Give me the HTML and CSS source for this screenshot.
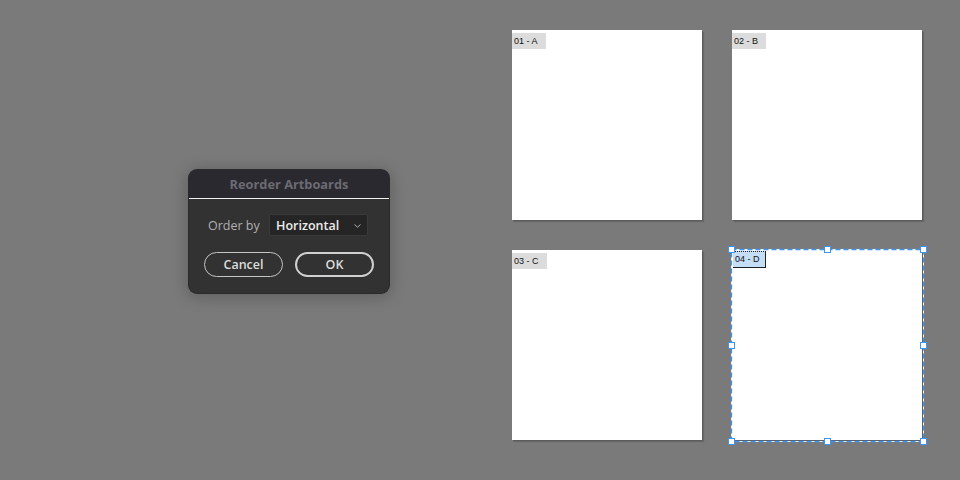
FILE: index.html
```html
<!DOCTYPE html>
<html>
<head>
<meta charset="utf-8">
<link rel="stylesheet" href="styles.css">
</head>
<body>
<div class="canvas">
  <div class="dialog">
    <div class="dialog-title">Reorder Artboards</div>
    <div class="dialog-body">
      <div class="row">
        <span class="label">Order by</span>
        <div class="select">
          <span>Horizontal</span>
          <svg class="chev" width="7" height="4" viewBox="0 0 7 4"><path d="M0.5 0.5 L3.5 3.2 L6.5 0.5" fill="none" stroke="#bdbdbd" stroke-width="0.9"/></svg>
        </div>
      </div>
      <div class="row buttons">
        <div class="btn">Cancel</div>
        <div class="btn primary">OK</div>
      </div>
    </div>
  </div>
  <div class="boards">
    <div class="board"><span class="tag">01 - A</span></div>
    <div class="board"><span class="tag">02 - B</span></div>
    <div class="board"><span class="tag">03 - C</span></div>
    <div class="board selected">
      <span class="tag sel-tag">04 - D</span>
      <svg class="selection" width="200" height="200" viewBox="0 0 200 200">
        <rect x="3.5" y="3.5" width="192" height="192" fill="none" stroke="#f4f4f4" stroke-width="1"/>
        <rect x="3.5" y="3.5" width="192" height="192" fill="none" stroke="#3d95f2" stroke-width="1.3" stroke-dasharray="5 3"/>
        <g fill="#ffffff" stroke="#3d95f2" stroke-width="1">
          <rect x="0.5" y="0.5" width="6" height="6"/>
          <rect x="96.5" y="0.5" width="6" height="6"/>
          <rect x="192.5" y="0.5" width="6" height="6"/>
          <rect x="0.5" y="96.5" width="6" height="6"/>
          <rect x="192.5" y="96.5" width="6" height="6"/>
          <rect x="0.5" y="192.5" width="6" height="6"/>
          <rect x="96.5" y="192.5" width="6" height="6"/>
          <rect x="192.5" y="192.5" width="6" height="6"/>
        </g>
      </svg>
    </div>
  </div>
</div>
</body>
</html>
```
FILE: styles.css
```css
html, body {
  margin: 0;
  padding: 0;
  background: #7a7a7a;
  width: 960px;
  height: 480px;
  overflow: hidden;
}
.canvas {
  display: flex;
  align-items: flex-start;
  padding: 30px 0 0 189px;
}
.dialog {
  margin-top: 140px;
  width: 200px;
  height: 123px;
  border-radius: 8px;
  background: #323232;
  box-shadow: 0 0 0 1px #2a2a2a, 0 2px 16px 2px rgba(0,0,0,0.22);
  overflow: hidden;
  font-family: "Open Sans", "DejaVu Sans", sans-serif;
  position: relative;
}
.dialog-title {
  height: 28px;
  background: #2a2930;
  border-bottom: 1px solid #f2f2f2;
  color: #6c6b73;
  font-weight: 700;
  font-size: 12.8px;
  line-height: 28px;
  text-align: center;
}
.dialog-body {
  padding: 15px 0 0 15px;
  display: flex;
  flex-direction: column;
  gap: 16px;
}
.row {
  display: flex;
  align-items: center;
}
.label {
  color: #b0b0b0;
  font-size: 12.5px;
  width: 61px;
  padding-left: 4px;
}
.select {
  width: 99px;
  height: 22px;
  box-sizing: border-box;
  background: #252525;
  border: 1px solid #3a3a3a;
  border-radius: 2px;
  display: flex;
  align-items: center;
  justify-content: space-between;
  padding: 0 6px 0 6px;
  color: #ececec;
  font-size: 12.5px;
  font-weight: 600;
}
.chev { margin-top: 1px; }
.buttons {
  gap: 12px;
}
.btn {
  width: 79px;
  height: 25px;
  box-sizing: border-box;
  border: 1.5px solid #c4c4c4;
  border-radius: 13px;
  color: #dcdcdc;
  font-size: 12.5px;
  font-weight: 600;
  display: flex;
  align-items: center;
  justify-content: center;
}
.btn.primary {
  border: 2px solid #d0d0d0;
}
.boards {
  margin-left: 123px;
  display: grid;
  grid-template-columns: 190px 190px;
  grid-auto-rows: 190px;
  gap: 30px;
}
.board {
  background: #ffffff;
  box-shadow: 1px 1px 0 #5c5c5c, 2px 2px 1px rgba(0,0,0,0.15);
  position: relative;
}
.tag {
  display: inline-block;
  background: #dcdcdc;
  color: #111;
  font-family: "Liberation Sans", Arial, sans-serif;
  font-size: 9px;
  line-height: 16px;
  height: 16px;
  padding: 0 8px 0 2px;
}
.sel-tag {
  position: absolute;
  left: 1px;
  top: 1px;
  background: #c6ddf6;
  border-right: 1px solid #222;
  border-bottom: 1px solid #222;
  border-top: 1px dotted #222;
  height: 15px;
  line-height: 15px;
  padding-right: 5px;
}
.selection {
  position: absolute;
  left: -4px;
  top: -4px;
  z-index: 2;
  pointer-events: none;
}
```
